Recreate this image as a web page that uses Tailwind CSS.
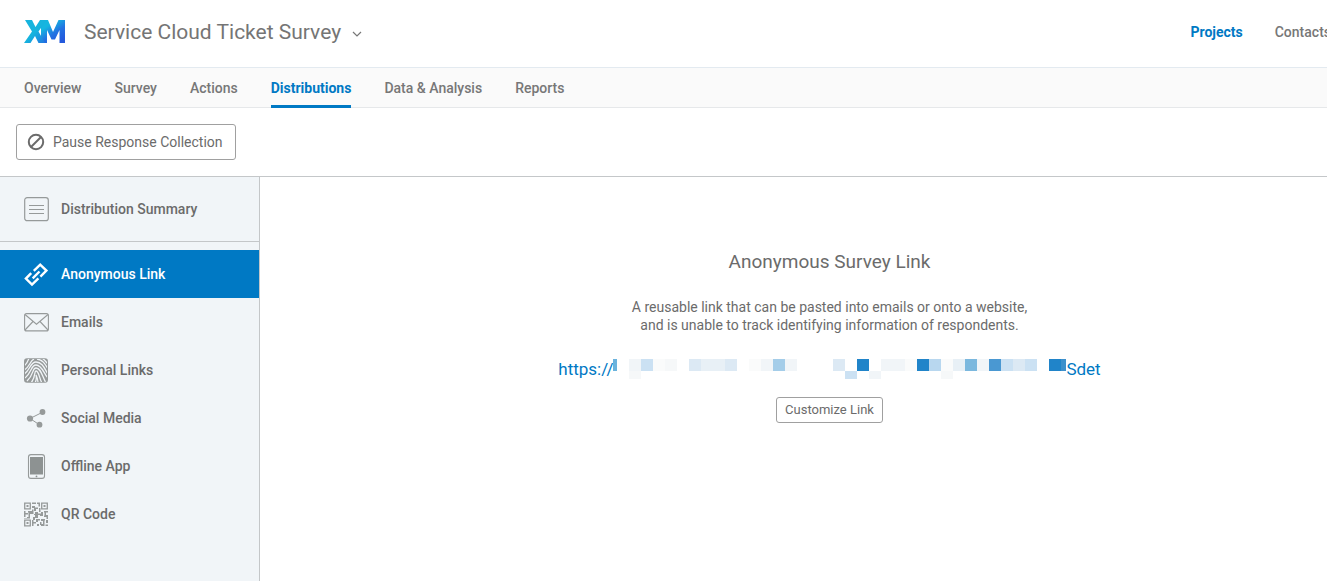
<!DOCTYPE html>
<html lang="en">
<head>
<meta charset="utf-8">
<meta name="viewport" content="width=device-width, initial-scale=1">
<title>Service Cloud Ticket Survey</title>
<script src="https://cdn.jsdelivr.net/npm/@tailwindcss/browser@4"></script>
</head>
<body class="flex min-h-screen flex-col overflow-x-hidden bg-white font-['Roboto',sans-serif] text-[15px] leading-5 text-[#6b6b6b]">
<header class="flex h-[67px] items-center overflow-hidden pb-1 pl-6">
  <svg class="h-[23px] w-[41px] shrink-0" viewBox="0 0 41 23" role="img" aria-label="XM">
    <defs>
      <linearGradient id="x" x1="0" y1="0" x2="1" y2="1"><stop offset=".5" stop-color="#16b4de"/><stop offset="1" stop-color="#2272e0"/></linearGradient>
      <linearGradient id="m" x1="0" y1="0" x2=".7" y2="1"><stop offset=".3" stop-color="#15b6e0"/><stop offset=".65" stop-color="#2272e2"/><stop offset="1" stop-color="#2459dc"/></linearGradient>
    </defs>
    <path fill="url(#m)" d="M17 0h7l5 12 5.500-12H41v23h-5.500V10L31 19.500h-3.500L23 10v13h-6z"/>
    <path fill="url(#x)" d="M1 0h7l3.500 7L16 0h6.500l-8 11.500L21 23h-6.500L11 16l-4.500 7H0l8-11.500z"/>
  </svg>
  <button type="button" class="ml-[19px] flex items-center gap-[11px] text-[21px] leading-7 whitespace-nowrap text-[#757575]">
    Service Cloud Ticket Survey
    <svg class="mt-1 h-2 w-[10px]" viewBox="0 0 10 8" fill="none" stroke="#777" stroke-width="1.2" aria-hidden="true"><path d="m1 2 4 4 4-4"/></svg>
  </button>
  <nav class="-mr-1 ml-auto flex gap-8 text-sm" aria-label="Main">
    <a href="#" class="font-bold text-[#0079c4]">Projects</a>
    <a href="#" class="font-medium text-[#777]">Contacts</a>
  </nav>
</header>
<nav class="flex h-[41px] gap-[33px] border-y border-t-[#e3eaf0] border-b-[#e6e8ea] bg-[#fafafa] px-6 text-sm font-medium text-[#777]" aria-label="Project">
  <a href="#" class="flex items-center">Overview</a>
  <a href="#" class="flex items-center">Survey</a>
  <a href="#" class="flex items-center">Actions</a>
  <a href="#" aria-current="page" class="-mb-px flex items-center border-b-3 border-[#0079c4] pt-[3px] font-bold text-[#0079c4]">Distributions</a>
  <a href="#" class="flex items-center">Data &amp; Analysis</a>
  <a href="#" class="flex items-center">Reports</a>
</nav>
<div class="border-b border-[#c4c7c9] p-4">
  <button type="button" class="flex h-9 items-center gap-2 rounded-[3px] border border-[#a0a0a0] px-3 text-sm">
    <svg class="-ml-0.5 h-[18px] w-[18px]" viewBox="0 0 18 18" fill="none" stroke="#6b6b6b" stroke-width="2" aria-hidden="true"><circle cx="9" cy="9" r="7.2"/><path d="m4 14 10-10"/></svg>
    Pause Response Collection
  </button>
</div>
<div class="flex flex-1">
  <aside class="w-[260px] shrink-0 border-r border-[#c4c7c9] bg-[#f1f5f8] text-sm font-medium">
    <nav aria-label="Distributions">
      <a href="#" class="mb-2 flex h-[65px] items-center gap-3 border-b border-[#c4c7c9] pl-6">
        <svg class="h-[25px] w-[25px]" viewBox="0 0 25 25" fill="none" stroke="#969a9a" aria-hidden="true"><rect x=".7" y=".7" width="23.6" height="23" rx="2.5" stroke-width="1.2"/><path d="M5 8.500h15M5 12.500h15M5 16.500h15" stroke-width="1"/></svg>
        Distribution Summary
      </a>
      <a href="#" aria-current="page" class="flex h-12 items-center gap-3 bg-[#0079c4] pl-6 text-white">
        <svg class="h-[25px] w-[25px]" viewBox="0 0 25 25" fill="none" stroke="#fff" stroke-width="2.4" aria-hidden="true"><path d="M9.800 8.800 16.200 2.600 22.400 8.600 16.400 14.600M7.200 11.200 1.900 16.600 8 22.600 14.400 16.400M8.700 16.300 15.500 9.500"/></svg>
        Anonymous Link
      </a>
      <a href="#" class="flex h-12 items-center gap-3 pl-6">
        <svg class="h-[25px] w-[25px]" viewBox="0 0 25 25" fill="none" stroke="#969a9a" stroke-width="1.1" aria-hidden="true"><rect x=".6" y="3.600" width="23.800" height="17.300" rx="2"/><path d="m1 4.500 11.500 9.700L24 4.500M1 20l8-8.500M24 20l-8-8.500"/></svg>
        Emails
      </a>
      <a href="#" class="flex h-12 items-center gap-3 pl-6">
        <svg class="h-[25px] w-[25px]" viewBox="0 0 25 25" aria-hidden="true">
          <clipPath id="f"><rect x="1" y="1" width="22" height="23" rx="2"/></clipPath>
          <rect y=".3" width="24" height="24.400" rx="3" fill="#969a9a"/>
          <g clip-path="url(#f)" fill="none" stroke="#f1f5f8" stroke-width="1.300"><path d="M0 8C3 6 4 3 5 0M0 12C5 10 6 3 10 1M0 16C6 13 6 4 12 4c7 0 9 8 12 12M1 20C8 14 7 7 12 7c6 0 8 9 12 13M3 23c7-6 5-13 9-13 5 0 6 8 10 15M7 25c5-6 3-12 5-12 3 0 3 7 6 12M11 25c2-4 1-8 1-8s2 4 2 8M13 1c6 1 8 5 11 10M18 0c3 2 4 4 6 6"/></g>
        </svg>
        Personal Links
      </a>
      <a href="#" class="flex h-12 items-center gap-3 pl-6">
        <svg class="h-[25px] w-[25px]" viewBox="0 0 25 25" fill="#969a9a" aria-hidden="true"><path d="M18 6.500 6 12.500l9.500 6.300" fill="none" stroke="#969a9a"/><circle cx="18.500" cy="6" r="2.900"/><circle cx="6" cy="12.500" r="3.100"/><circle cx="15.500" cy="18.700" r="2.900"/></svg>
        Social Media
      </a>
      <a href="#" class="flex h-12 items-center gap-3 pl-6">
        <svg class="h-[25px] w-[25px]" viewBox="0 0 25 25" aria-hidden="true"><rect x="4.500" y=".6" width="16" height="23.800" rx="2.500" fill="none" stroke="#969a9a" stroke-width="1.100"/><path d="M6 3h13v17.500H6z" fill="#8d9292"/><circle cx="12.500" cy="22.400" r=".9" fill="#8d9292"/></svg>
        Offline App
      </a>
      <a href="#" class="flex h-12 items-center gap-3 pl-6">
        <svg class="h-[25px] w-[25px]" viewBox="0 0 25 25" aria-hidden="true">
          <g fill="none" stroke="#969a9a" stroke-width="1.300"><path d="M.7 1.200h5.600v5.600H.7zM17.700 1.200h5.600v5.600h-5.600zM.7 18.200h5.600v5.600H.7z"/></g>
          <path fill="#969a9a" d="M2.500 3h2v2h-2zM19.500 3h2v2h-2zM2.500 20h2v2h-2zM8 .5h4V2H8zM13 .5h3v4h-1.500V2H13zM8 4h3v1.500h3V7h-2v2h-2V6H8zM15 6h1.500v4H15zM0 9h1.500v2H4v1.500H1.500V15H0zM4 9h4V7.500h1.500V12H6v3H4.500v-4.500H4zM11 10h3v1.500h3V10h2v4h-3v-1h-2v3h-3v2H9v-3h2v-2h-1v-1h1zM20 9h4v1.500h-2V13h2v4h-1.500v-2H20v-1.500h.5v-3H20zM8 18h1.500v2H12v1.500H9.500V24H8zM12 17h4v1.500h-2V20h-2zM13 22h2v2h-2zM16 20h1.500v2H19v-3h-2v-2h4v1.500h-.5V24H17v-1h-1zM22 18h2v3h-2zM21.500 22.500H24V24h-2.500zM0 16h3v-1h3v1.500H0z"/>
        </svg>
        QR Code
      </a>
    </nav>
  </aside>
  <main class="flex flex-1 flex-col items-center pt-[71px] pr-6 pl-24 text-center">
    <h1 class="text-[19px] leading-7">Anonymous Survey Link</h1>
    <p class="mt-[22px] text-sm leading-[18px]">A reusable link that can be pasted into emails or onto a website,<br>and is unable to track identifying information of respondents.</p>
    <a href="#" aria-label="Anonymous survey link" class="mt-[23px] flex text-[17px] leading-6 text-[#0079c4]">
      <span>https://</span>
      <svg class="mt-0.5 h-5 w-[453px]" viewBox="614 359 453 20" shape-rendering="crispEdges" aria-hidden="true">
        <path fill="#6bb3dd" d="M614 359h4v12h-4z"/>
        <path fill="#f1f5f8" d="M630 359h12v12h-12zM762 359h12v12h-12zM786 359h12v12h-12zM870 371h12v8h-12zM882 359h24v12h-24zM978 359h12v12h-12z"/>
        <path fill="#cbe1f3" d="M642 359h12v12h-12zM846 371h12v8h-12zM1002 359h12v12h-12zM1026 359h12v12h-12z"/>
        <path fill="#fafbfb" d="M654 359h12v12h-12zM750 359h12v12h-12zM906 359h12v12h-12zM942 359h12v12h-12z"/>
        <path fill="#f6f8f9" d="M666 359h12v12h-12zM630 371h12v8h-12zM942 371h12v8h-12z"/>
        <path fill="#dce9f4" d="M690 359h12v12h-12zM726 359h12v12h-12zM834 359h12v12h-12zM1014 359h12v12h-12z"/>
        <path fill="#e8f0f6" d="M702 359h24v12h-24zM954 359h12v12h-12z"/>
        <path fill="#a4cde9" d="M774 359h12v12h-12z"/>
        <path fill="#b8d7ef" d="M930 359h12v12h-12z"/>
        <path fill="#7bb8de" d="M966 359h12v12h-12z"/>
        <path fill="#4a98d2" d="M990 359h12v12h-12z"/>
        <path fill="#2084c9" d="M858 359h12v12h-12zM918 359h12v12h-12zM1050 359h12v12h-12z"/>
        <path fill="#3d90cc" d="M1062 359h5v12h-5z"/>
      </svg>
      <span>Sdet</span>
    </a>
    <button type="button" class="mt-4 h-[26px] rounded-[3px] border border-[#a0a0a0] px-2 text-[13px]">Customize Link</button>
  </main>
</div>
</body>
</html>
